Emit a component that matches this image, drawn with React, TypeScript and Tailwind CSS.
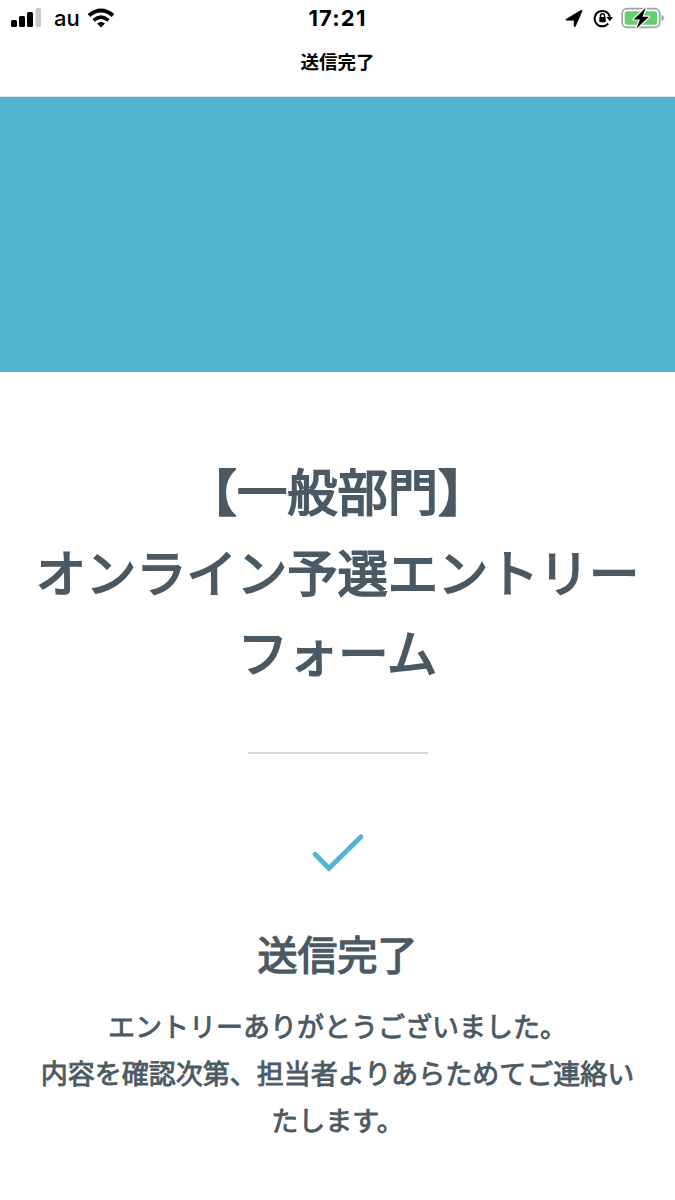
function SignalIcon() {
  return (
    <svg width="30" height="20" viewBox="0 0 30 20">
      <rect x="0" y="12" width="6" height="7" rx="1.6" />
      <rect x="8" y="8" width="6" height="11" rx="1.6" />
      <rect x="16" y="4" width="6" height="15" rx="1.6" />
      <rect x="24.5" y="0" width="5.5" height="19" rx="1.6" fill="#cbcbcb" />
    </svg>
  );
}

function WifiIcon() {
  return (
    <svg width="28" height="20" viewBox="0 0 28 20" fill="none" stroke="black" strokeWidth="4">
      <path d="M2 7.5Q14-2.5 26 7.5" />
      <path d="M6.5 12.3Q14 6 21.5 12.3" strokeWidth="3.6" />
      <path d="M10 15.4Q14 12.4 18 15.4L14 19.5Z" fill="black" stroke="none" />
    </svg>
  );
}

function LocationIcon() {
  return (
    <svg width="18" height="19" viewBox="0 0 18 19">
      <path d="M1.2 10.2L16 1.3Q17.5.7 17 2.3L10.3 17.4Q9.4 18.7 9.1 17.1V11.3H1.8Q.1 11 1.2 10.2Z" stroke="black" strokeWidth=".6" />
    </svg>
  );
}

function RotationLockIcon() {
  return (
    <svg width="20" height="20" viewBox="0 0 20 20" fill="none" stroke="black">
      <path d="M15.2 15.6A7.7 7.7 0 1 1 16.8 8.8" strokeWidth="2" />
      <path d="M13.5 9H20L16.8 13.2Z" fill="black" stroke="none" />
      <path d="M7.5 9.3V7.7a2 2 0 0 1 4 0V9.3" strokeWidth="1.4" />
      <rect x="6.3" y="9" width="6.4" height="5.2" rx=".7" fill="black" stroke="none" />
    </svg>
  );
}

function BatteryIcon() {
  return (
    <svg width="44" height="24" viewBox="0 0 44 24">
      <rect x="1.2" y="2.7" width="37.5" height="18.6" rx="4.8" fill="white" stroke="#a2a2a2" strokeWidth="1.7" />
      <rect x="3.7" y="5.2" width="32.5" height="13.6" rx="2.8" fill="#65cf70" />
      <path d="M40.5 8.8Q43 9.5 43 12T40.5 15.2Z" fill="#a2a2a2" />
      <path d="M24.7 1.8L12.6 13.4H18.9L15.5 22.4L28 10.8H21.6Z" stroke="white" strokeWidth="2.4" paintOrder="stroke" strokeLinejoin="round" />
    </svg>
  );
}

export default function App() {
  return (
    <main className="flex h-[1200px] w-[675px] flex-col overflow-hidden bg-white font-['Noto_Sans_CJK_JP',sans-serif] text-[#4a5963]">
      <header className="flex h-[97px] shrink-0 flex-col border-b border-[#e6e6e6] text-black">
        <div className="grid h-[36px] shrink-0 grid-cols-3 items-center pr-[10px] pl-[11px]">
          <div className="flex items-center">
            <SignalIcon />
            <span className="ml-[13px] w-[25px] font-['Inter',sans-serif] text-[22px] leading-none font-medium">au</span>
            <span className="ml-[8px]"><WifiIcon /></span>
          </div>
          <div className="pr-[1px] text-center font-['Inter',sans-serif] text-[22px] leading-none font-bold tracking-[1.2px]">17:21</div>
          <div className="flex items-center justify-end">
            <LocationIcon />
            <span className="ml-[10px]"><RotationLockIcon /></span>
            <span className="ml-[8px]"><BatteryIcon /></span>
          </div>
        </div>
        <h1 className="text-center text-[18.5px] leading-[51px] font-bold">送信完了</h1>
      </header>
      <div className="h-[275px] shrink-0 bg-[#53b6d0]" />
      <section className="flex flex-col items-center pt-[77px] text-center">
        <h2 className="h-[243px] text-[50.3px] leading-[80.5px] font-normal whitespace-nowrap [-webkit-text-stroke:1.9px_#4a5963]">【一般部門】<br />オンライン予選エントリー<br />フォーム</h2>
        <div className="mt-[60px] h-[2px] w-[180px] bg-[#d5d8da]" />
        <svg className="mt-[79px]" width="54" height="40" viewBox="0 0 54 40"><path d="M4 21.3L18 35.3L50 3.8" fill="none" stroke="#50b5d0" strokeWidth="4.8" strokeLinecap="round" /></svg>
        <h3 className="mt-[50px] text-[40px] leading-[60px] font-normal [-webkit-text-stroke:1.4px_#4a5963]">送信完了</h3>
        <p className="mt-[19px] text-[27px] leading-[47px] font-normal whitespace-nowrap [-webkit-text-stroke:0.85px_#4a5963]">エントリーありがとうございました。<br />内容を確認次第、担当者よりあらためてご連絡い<br />たします。</p>
      </section>
    </main>
  );
}
